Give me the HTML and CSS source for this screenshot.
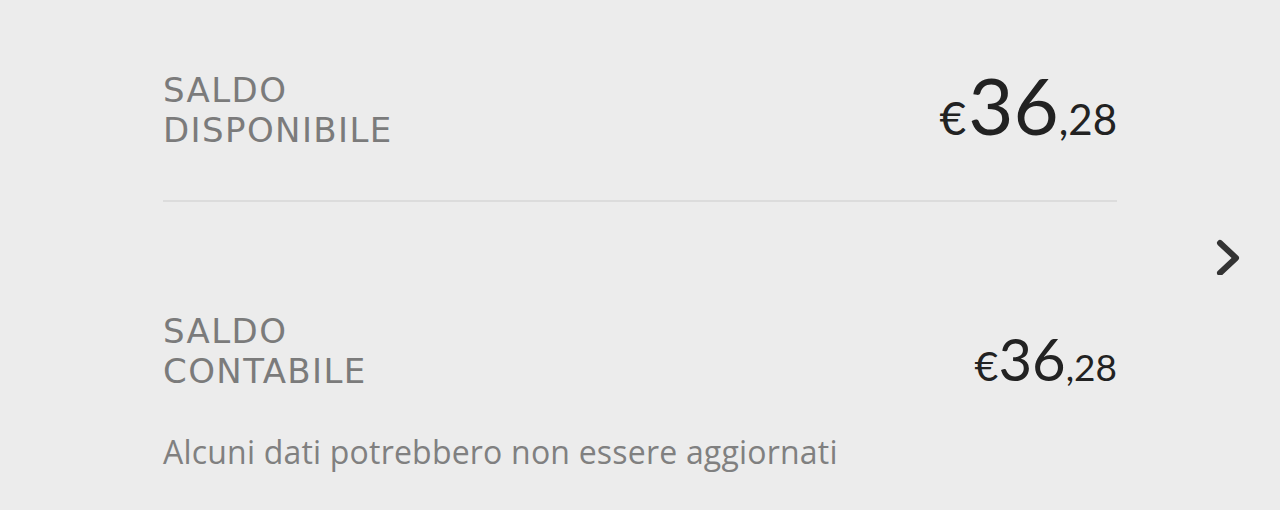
FILE: index.html
```html
<!DOCTYPE html>
<html lang="it">
<head>
<meta charset="utf-8">
<link rel="stylesheet" href="styles.css">
</head>
<body>
<div class="page">
  <div class="card">
    <div class="row row-top">
      <div class="label">SALDO<br>DISPONIBILE</div>
      <div class="amount big"><span class="cur">€</span><span class="int">36</span><span class="dec">,28</span></div>
    </div>
    <div class="sep"></div>
    <div class="row row-bottom">
      <div class="label">SALDO<br>CONTABILE</div>
      <div class="amount small"><span class="cur">€</span><span class="int">36</span><span class="dec">,28</span></div>
    </div>
    <div class="note">Alcuni dati potrebbero non essere aggiornati</div>
  </div>
  <div class="chev">
    <svg width="34" height="40" viewBox="0 0 34 40"><path d="M9 8 L25 23 L9 38" fill="none" stroke="#333" stroke-width="6" stroke-linecap="round" stroke-linejoin="round"/></svg>
  </div>
</div>
</body>
</html>
```
FILE: styles.css
```css
html, body { margin: 0; padding: 0; }
body { background: #ececec; width: 1280px; height: 510px; overflow: hidden; }
.page { display: flex; height: 510px; padding-left: 163px; box-sizing: border-box; }
.card { width: 954px; flex: none; padding-top: 70px; }
.row { display: flex; justify-content: space-between; align-items: flex-start; }
.label { font-family: "DejaVu Sans", sans-serif; font-size: 34px; line-height: 40px; letter-spacing: 1.4px; color: #7b7b7b; }
.amount { font-family: "Lato", sans-serif; color: #222; white-space: nowrap; line-height: 1; }
.big { margin-top: -4px; }
.big .cur { font-size: 46px; margin-right: 2px; }
.big .int { font-size: 78px; }
.big .dec { font-size: 42px; }
.small { margin-top: 19px; }
.small .cur { font-size: 41px; }
.small .int { font-size: 58px; }
.small .dec { font-size: 37px; }
.sep { height: 2px; background: #dcdcdc; margin: 50px 0 109px; }
.note { font-family: "Open Sans", sans-serif; font-size: 32px; letter-spacing: 0.2px; color: #808080; margin-top: 39px; white-space: nowrap; }
.chev { flex: 1; display: flex; align-items: center; padding-left: 94px; }
```
